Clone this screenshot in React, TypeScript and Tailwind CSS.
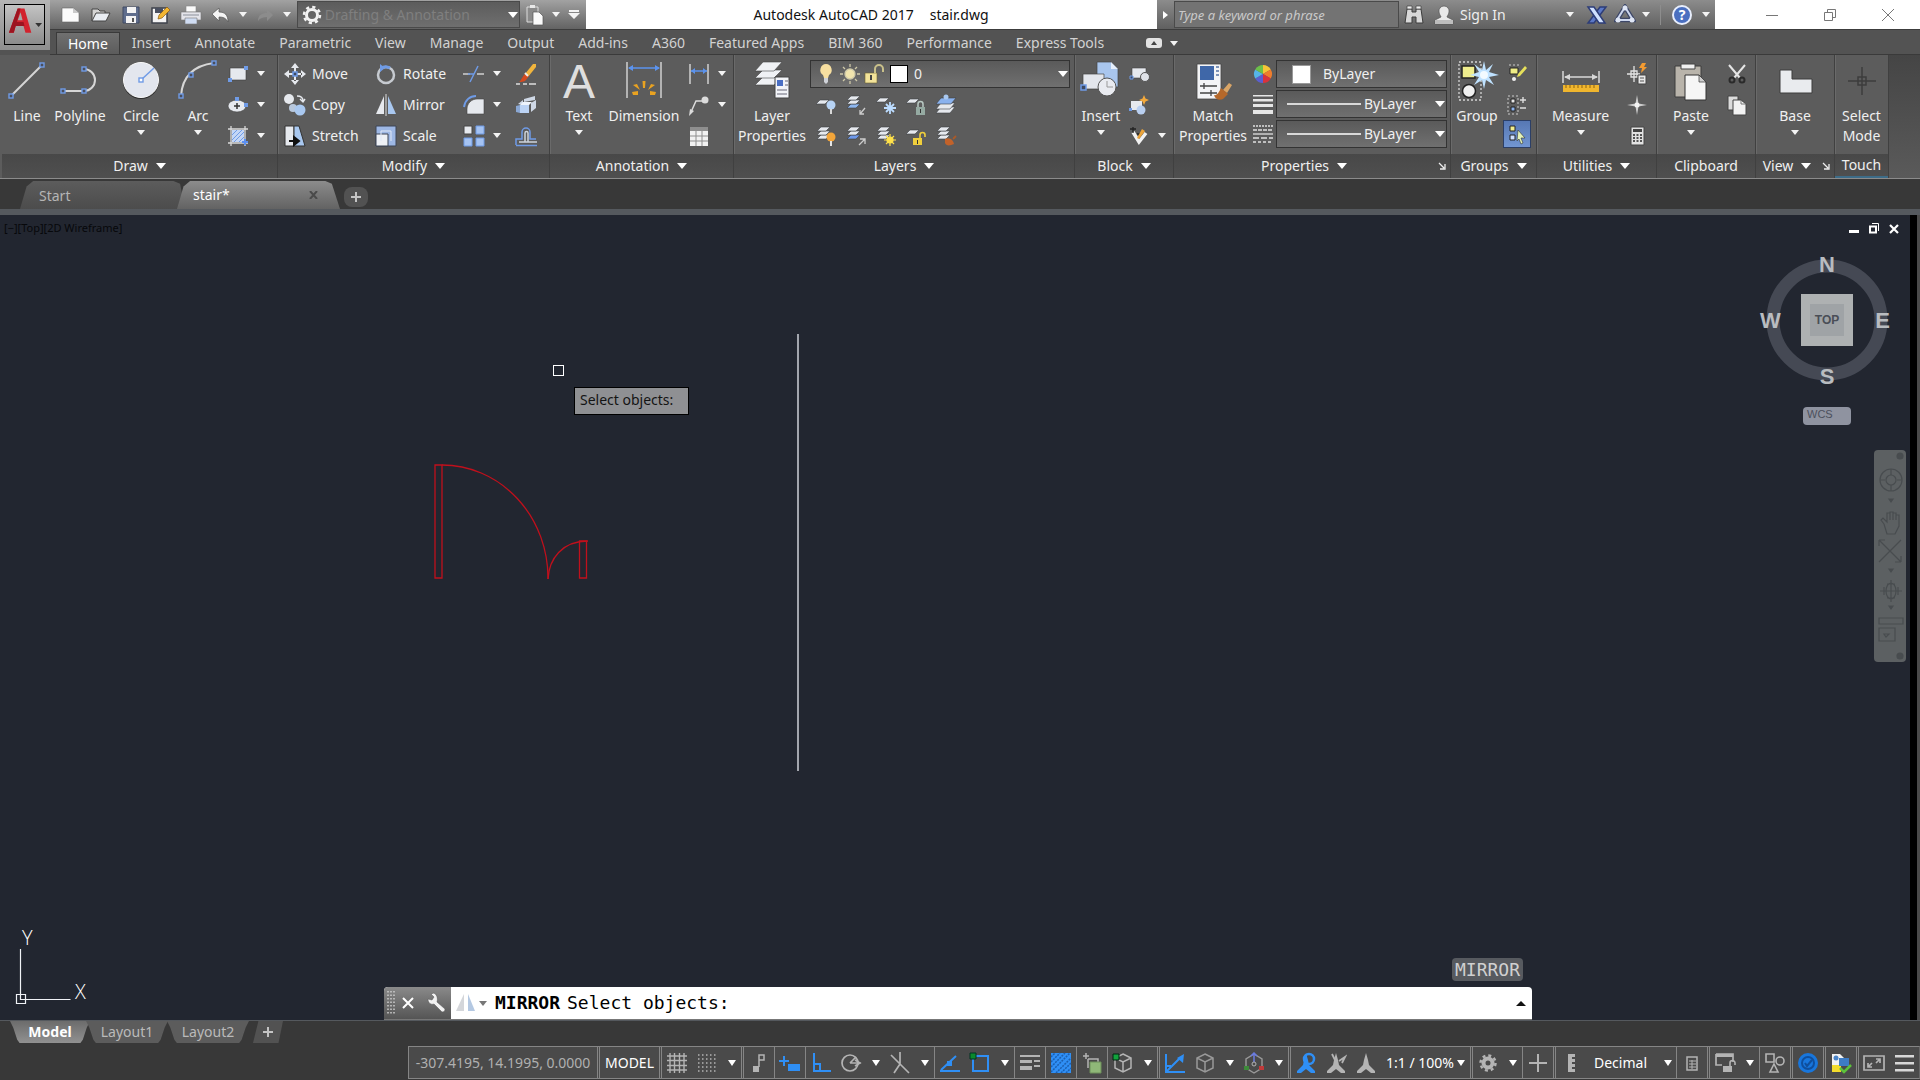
import React from "react";

type Kids = { children?: React.ReactNode };

const W = "#e6e9ee";
const B = "#6f9be6";
const L = "#a9c8f0";

function Ico({ children }: Kids) {
  return (
    <svg viewBox="0 0 22 22" className="h-[22px] w-[22px] shrink-0" fill="none" aria-hidden="true">
      {children}
    </svg>
  );
}

function Big({ children }: Kids) {
  return (
    <svg viewBox="0 0 48 48" className="h-12 w-12 shrink-0" fill="none" aria-hidden="true">
      {children}
    </svg>
  );
}

function Tri() {
  return (
    <svg viewBox="0 0 8 5" className="h-[5px] w-2 shrink-0" aria-hidden="true">
      <path d="M0 0h8L4 5z" fill="#f4f4f4" />
    </svg>
  );
}

function TriBig() {
  return (
    <svg viewBox="0 0 10 6" className="h-[6px] w-[10px] shrink-0" aria-hidden="true">
      <path d="M0 0h10L5 6z" fill="#fff" />
    </svg>
  );
}

function Node({ x, y }: { x: number; y: number }) {
  return <rect x={x - 2} y={y - 2} width="4" height="4" fill="#4a4f5c" stroke={B} strokeWidth="1.4" />;
}

/* ---------- small icon parts ---------- */

function Sheet({ x, y, fill = W }: { x: number; y: number; fill?: string }) {
  return <path d={`M${x + 4} ${y}h9l-4 4h-9z`} fill={fill} stroke="#3d3f44" strokeWidth=".6" />;
}

function Stack({ last = W }: { last?: string }) {
  return (
    <>
      <Sheet x={2} y={10} fill={last} />
      <Sheet x={2} y={6} />
      <Sheet x={2} y={2} />
    </>
  );
}

function Sun({ x, y, fill }: { x: number; y: number; fill: string }) {
  return (
    <g stroke={fill} strokeWidth="1.2">
      <circle cx={x} cy={y} r="3" fill={fill} />
      <path
        d={`M${x - 6} ${y}h12M${x} ${y - 6}v12M${x - 4} ${y - 4}l8 8M${x + 4} ${y - 4}l-8 8`}
      />
    </g>
  );
}

/* ---------- ribbon building blocks ---------- */

function Panel({
  title,
  arrow = true,
  launcher = false,
  underline = false,
  children,
}: Kids & { title: string; arrow?: boolean; launcher?: boolean; underline?: boolean }) {
  return (
    <section
      aria-label={title}
      className="flex min-w-0 flex-col border-r border-[#404040] shadow-[1px_0_0_#6a6a6a]"
    >
      <div className="flex h-[99px] items-start pt-[3px]">{children}</div>
      <div
        className={
          underline
            ? "relative flex h-6 items-center justify-center border-b-2 border-[#3d6c88] bg-gradient-to-b from-[#484848] to-[#4f4f4f]"
            : "relative flex h-6 items-center justify-center bg-gradient-to-b from-[#484848] to-[#4f4f4f]"
        }
      >
        <button className={launcher ? "flex items-center gap-2 pr-4 text-[#f0f0f0]" : "flex items-center gap-2 text-[#f0f0f0]"}>
          {title}
          {arrow && <TriBig />}
        </button>
        {launcher && (
          <button aria-label={title + " settings"} className="absolute right-1 top-2">
            <svg viewBox="0 0 8 8" className="h-2 w-2" fill="none" stroke="#eee" strokeWidth="1.3">
              <path d="M1 1l5 5M7 2v5H2" />
            </svg>
          </button>
        )}
      </div>
    </section>
  );
}

function BigButton({
  icon,
  label,
  arrow = false,
  width,
}: {
  icon: React.ReactNode;
  label: string[];
  arrow?: boolean;
  width: string;
}) {
  return (
    <button className={"flex shrink-0 flex-col items-center leading-5 " + width}>
      {icon}
      {label.map((t) => (
        <span key={t} className="whitespace-nowrap">
          {t}
        </span>
      ))}
      {arrow && (
        <span className="pt-1">
          <Tri />
        </span>
      )}
    </button>
  );
}

function Tool({
  name,
  text,
  arrow = false,
  children,
}: Kids & { name: string; text?: boolean; arrow?: boolean }) {
  return (
    <button aria-label={name} className="flex h-[31px] items-center whitespace-nowrap">
      {children}
      {text && <span className="ml-[6px]">{name}</span>}
      {arrow && (
        <span className="ml-2">
          <Tri />
        </span>
      )}
    </button>
  );
}

function Combo({
  label,
  value,
  lead,
  className,
}: {
  label: string;
  value: string;
  lead: React.ReactNode;
  className: string;
}) {
  return (
    <div
      className={
        "flex items-center border border-[#333] bg-gradient-to-b from-[#5a5a5a] to-[#707070] pr-px " +
        className
      }
    >
      {lead}
      <select
        aria-label={label}
        className="min-w-0 flex-1 appearance-none bg-transparent leading-5 text-[#f0f0f0] outline-none"
      >
        <option>{value}</option>
      </select>
      <TriBig />
    </div>
  );
}

/* ---------- title bar ---------- */

function QuickAccess() {
  const cell = "flex w-[30px] shrink-0 items-center justify-center";
  return (
    <div className="flex w-[536px] shrink-0 items-center bg-gradient-to-b from-[#a2a2a2] to-[#636363] pl-[6px]">
      <button aria-label="New" className={cell}>
        <Ico>
          <path d="M2 4h11l6 5v9H2z" fill="#fafafa" stroke="#666" strokeWidth=".6" />
          <path d="M13 4v5h6z" fill="#c9c9c9" />
        </Ico>
      </button>
      <button aria-label="Open" className={cell}>
        <Ico>
          <path d="M2 17V5h6l2 2h5v3" fill="#d5d5d5" stroke="#444" />
          <path d="M2 17l4-8h14l-4 8z" fill="#e9edf3" stroke="#444" />
        </Ico>
      </button>
      <button aria-label="Save" className={cell}>
        <Ico>
          <path d="M3 3h16v16H3z" fill="#5f6d8c" stroke="#414b63" />
          <path d="M7 3h9v6H7zM6 12h10v7H6z" fill="#f3f3f3" />
          <path d="M12 14h2v4h-2z" fill="#555" />
        </Ico>
      </button>
      <button aria-label="Save As" className={cell}>
        <Ico>
          <path d="M2 4h15v15H2z" fill="#f3f3f3" stroke="#3e424b" strokeWidth="1.5" />
          <path d="M5 4h8v5H5z" fill="#4a5060" />
          <path d="M8 15l1-4 8-8 3 3-8 8z" fill="#f2b632" stroke="#8a5a10" strokeWidth=".7" />
        </Ico>
      </button>
      <button aria-label="Plot" className={cell}>
        <Ico>
          <path d="M6 2h10v6H6z" fill="#fafafa" stroke="#888" strokeWidth=".6" />
          <path d="M1 8h20v8H1z" fill="#e4e4ea" stroke="#777" strokeWidth=".6" />
          <path d="M5 14h12v6H5z" fill="#cfdcf2" stroke="#777" strokeWidth=".6" />
          <path d="M3 11h16" stroke="#8a8f99" />
        </Ico>
      </button>
      <button aria-label="Undo" className={cell}>
        <Ico>
          <path d="M9 4v4c6 0 9 3 9 10-2-4-5-5-9-5v4L2 10z" fill="#f4f4f4" stroke="#555" strokeWidth=".7" />
        </Ico>
      </button>
      <button aria-label="Undo history" className="flex w-[14px] justify-center">
        <Tri />
      </button>
      <button aria-label="Redo" className={cell}>
        <Ico>
          <path d="M13 5v4C8 9 4 11 4 17c2-3 5-4 9-4v4l6-6z" fill="#8c8c8c" />
        </Ico>
      </button>
      <button aria-label="Redo history" className="flex w-[14px] justify-center">
        <Tri />
      </button>
      <div className="ml-[3px] flex h-[27px] w-[226px] items-center border border-[#4a4a4a] bg-gradient-to-b from-[#5c5c5c] to-[#6f6f6f] pl-[3px] pr-px">
        <Ico>
          <circle cx="11" cy="11" r="5.5" stroke="#f2f2f2" strokeWidth="3" />
          <circle cx="11" cy="11" r="8" stroke="#f2f2f2" strokeWidth="2.5" strokeDasharray="3.2 3.08" />
        </Ico>
        <select
          aria-label="Workspace"
          className="min-w-0 flex-1 appearance-none bg-transparent pl-[2px] leading-5 text-[#7f7f7f] outline-none"
        >
          <option>Drafting &amp; Annotation</option>
        </select>
        <TriBig />
      </div>
      <button aria-label="Paste" className={cell}>
        <Ico>
          <path d="M3 3h11v15H3z" fill="#8a8a8a" stroke="#ddd" />
          <path d="M6 1h5v3H6z" fill="#e8e8e8" />
          <path d="M9 8h6l4 4v9H9z" fill="#fafafa" stroke="#555" strokeWidth=".7" />
        </Ico>
      </button>
      <button aria-label="Paste options" className="flex w-3 justify-center">
        <Tri />
      </button>
      <button aria-label="Customize toolbar" className="flex w-6 justify-center">
        <svg viewBox="0 0 12 9" className="h-[9px] w-3" fill="#f4f4f4">
          <path d="M1 0h10v2H1zM0 3h12L6 9z" />
        </svg>
      </button>
    </div>
  );
}

function InfoCenter() {
  return (
    <div className="flex w-[558px] shrink-0 items-center bg-gradient-to-b from-[#8c8c8c] to-[#606060]">
      <button aria-label="Collapse search" className="flex w-[17px] justify-center">
        <svg viewBox="0 0 5 8" className="h-2 w-[5px]">
          <path d="M0 0v8l5-4z" fill="#fff" />
        </svg>
      </button>
      <input
        aria-label="Search"
        placeholder="Type a keyword or phrase"
        className="h-[27px] w-[225px] border border-[#4a4a4a] bg-[#737373] px-[3px] text-[13px] italic text-white outline-none placeholder:text-[#c9c9c9]"
      />
      <button aria-label="Find" className="flex w-[30px] justify-center">
        <Ico>
          <path d="M4 5h5v3h4V5h5l2 14h-7v-6H9v6H2z" fill="#d8d8d8" stroke="#3c3c3c" />
          <path d="M4 2h5v3H4zM13 2h5v3h-5z" fill="#efefef" stroke="#3c3c3c" strokeWidth=".7" />
        </Ico>
      </button>
      <button className="flex w-[84px] items-center gap-[5px] pl-1 text-[#eee]">
        <Ico>
          <path d="M11 2a5 5 0 0 1 5 6c-.4 3-2 4-2 5l6 3v4H2v-4l6-3c0-1-1.600-2-2-5a5 5 0 0 1 5-6z" fill="#e9e9e9" stroke="#555" strokeWidth=".7" />
          <path d="M2 16h18v4H2z" fill="#bdbdbd" />
        </Ico>
        <span className="whitespace-nowrap">Sign In</span>
      </button>
      <span className="flex flex-1 justify-end pr-2">
        <Tri />
      </span>
      <button aria-label="Exchange Apps" className="flex w-[30px] justify-center">
        <Ico>
          <path d="M14 3h6L8 19H2z" fill="#5b78c6" stroke="#2d3d78" strokeWidth="1.500" />
          <path d="M2 3h6l11 16h-6z" fill="#cfe0ff" stroke="#2d3d78" strokeWidth="1.500" />
        </Ico>
      </button>
      <button aria-label="Autodesk 360" className="flex w-[26px] justify-center">
        <Ico>
          <path d="M11 3l8 13H3z" stroke="#3d4768" strokeWidth="4.500" />
          <path d="M11 3l8 13H3z" stroke="#ccd6ee" strokeWidth="2" />
          <circle cx="11" cy="4" r="2.500" fill="#dfe6f5" />
          <circle cx="4" cy="16" r="2.500" fill="#dfe6f5" />
          <circle cx="18" cy="16" r="2.500" fill="#dfe6f5" />
        </Ico>
      </button>
      <span className="flex w-4 justify-center">
        <Tri />
      </span>
      <span className="mx-[6px] h-5 w-px bg-[#8d8d8d]" />
      <button aria-label="Help" className="flex w-[30px] justify-center">
        <span className="flex h-5 w-5 items-center justify-center rounded-full border-2 border-[#e8eefc] bg-[#4a6fc0] text-sm font-bold text-white">
          ?
        </span>
      </button>
      <span className="flex w-[18px] justify-center">
        <Tri />
      </span>
    </div>
  );
}

function WindowButtons() {
  const cls = "flex w-[58px] items-center justify-center";
  return (
    <div className="flex w-[205px] shrink-0 bg-white pl-7">
      <button aria-label="Minimize" className={cls}>
        <svg viewBox="0 0 12 12" className="h-3 w-3" stroke="#777">
          <path d="M0 6.500h12" />
        </svg>
      </button>
      <button aria-label="Restore" className={cls}>
        <svg viewBox="0 0 12 12" className="h-3 w-3" stroke="#777" fill="none">
          <path d="M.5 3.500h8v8h-8zM3.500 3.500v-3h8v8h-3" />
        </svg>
      </button>
      <button aria-label="Close" className={cls}>
        <svg viewBox="0 0 12 12" className="h-3 w-3" stroke="#777">
          <path d="M0 0l12 12M12 0L0 12" />
        </svg>
      </button>
    </div>
  );
}

const menu = [
  "Home",
  "Insert",
  "Annotate",
  "Parametric",
  "View",
  "Manage",
  "Output",
  "Add-ins",
  "A360",
  "Featured Apps",
  "BIM 360",
  "Performance",
  "Express Tools",
];

function Header() {
  return (
    <header className="flex bg-[#535353]">
      <div className="h-[50px] w-[50px] shrink-0 bg-gradient-to-b from-[#b4b4b4] to-[#8e8e8e] p-1">
        <button
          aria-label="Application menu"
          className="flex h-[41px] w-[41px] items-center border border-black bg-gradient-to-b from-[#c4c4c4] to-[#8b8b8b]"
        >
          <svg viewBox="0 0 40 40" className="h-10 w-10">
            <path d="M4 28L13 3h7l7 25h-6l-2-7h-8l-2 7z" fill="#d2232e" />
            <path d="M13 15l3-8 2 8z" fill="#a9a9a9" />
            <path d="M4 28L13 3h3L9 28zM12 17h7l1 4h-9z" fill="#9c1420" />
            <path d="M31 18h7l-3.500 4z" fill="#333" />
          </svg>
        </button>
      </div>
      <div className="flex min-w-0 flex-1 flex-col">
        <div className="flex h-[30px] border-b border-[#3c3c3c]">
          <QuickAccess />
          <h1 className="flex min-w-0 flex-1 items-center justify-center gap-4 whitespace-nowrap bg-white pr-px text-[#111]">
            <span>Autodesk AutoCAD 2017</span>
            <span>stair.dwg</span>
          </h1>
          <InfoCenter />
          <WindowButtons />
        </div>
        <nav className="flex h-[25px] items-end border-b border-[#3a3a3a] pl-[6px] text-[#d2d2d2]">
          {menu.map((m) => (
            <button
              key={m}
              className={
                m === "Home"
                  ? "h-[22px] whitespace-nowrap border border-b-0 border-[#3a3a3a] bg-gradient-to-b from-[#707070] to-[#5c5c5c] px-[11px] leading-5 text-white"
                  : "h-[22px] whitespace-nowrap px-3 leading-5"
              }
            >
              {m}
            </button>
          ))}
          <button aria-label="Minimize ribbon" className="ml-[30px] flex h-[22px] items-center gap-2">
            <svg viewBox="0 0 16 10" className="h-[10px] w-4">
              <rect width="16" height="10" rx="3" fill="#e3e3e3" />
              <path d="M5 7h6L8 3z" fill="#444" />
            </svg>
            <Tri />
          </button>
        </nav>
      </div>
    </header>
  );
}

/* ---------- ribbon ---------- */

function DrawPanel() {
  return (
    <Panel title="Draw">
      <BigButton
        width="w-[50px]"
        label={["Line"]}
        icon={
          <Big>
            <path d="M8 38L39 7" stroke="#d6d6d6" strokeWidth="2" />
            <Node x={8} y={38} />
            <Node x={39} y={7} />
          </Big>
        }
      />
      <BigButton
        width="w-[56px]"
        label={["Polyline"]}
        icon={
          <Big>
            <path d="M7 33h21a11 11 0 0 0 0-22" stroke="#d6d6d6" strokeWidth="2" />
            <Node x={7} y={33} />
            <Node x={28} y={33} />
            <Node x={28} y={11} />
          </Big>
        }
      />
      <BigButton
        width="w-[66px]"
        label={["Circle"]}
        arrow
        icon={
          <Big>
            <circle cx="24" cy="23" r="18" fill="#2e2e2e" />
            <circle cx="24" cy="22" r="17.500" fill="#e3e6ee" stroke="#fafafa" />
            <path d="M24 22L37 10" stroke={B} strokeWidth="1.500" />
            <rect x="22" y="20" width="4" height="4" fill="#fff" stroke={B} strokeWidth="1.400" />
          </Big>
        }
      />
      <BigButton
        width="w-[48px]"
        label={["Arc"]}
        arrow
        icon={
          <Big>
            <path d="M7 38C8 22 16 8 40 5" stroke="#d6d6d6" strokeWidth="2" />
            <Node x={7} y={38} />
            <Node x={17} y={17} />
            <Node x={40} y={5} />
          </Big>
        }
      />
      <div className="ml-[5px] flex flex-col">
        <Tool name="Rectangle" arrow>
          <Ico>
            <path d="M3 5h16v12H3z" fill={W} stroke="#3e3e3e" strokeWidth=".6" />
            <path d="M1 15h4v4H1zM17 3h4v4h-4z" fill={B} />
          </Ico>
        </Tool>
        <Tool name="Ellipse" arrow>
          <Ico>
            <ellipse cx="10" cy="12" rx="9" ry="6" fill={W} stroke="#444" strokeWidth=".6" />
            <path d="M7 12h6M10 9v6" stroke="#333" strokeWidth="1.500" />
            <path d="M8 3h4v4H8zM17 9h4v4h-4z" fill={B} />
          </Ico>
        </Tool>
        <Tool name="Hatch" arrow>
          <Ico>
            <path d="M5 5h12v12H5z" fill="#c4d6f5" />
            <path d="M5 10l5-5M5 15l10-10M7 17L17 7M12 17l5-5" stroke={B} />
            <path d="M4 1v20M18 1v20M1 4h20M1 18h20" stroke="#d9d9d9" strokeWidth="1.300" />
            <path d="M15 17h6M18 14v6" stroke="#5b8ff0" strokeWidth="2" />
          </Ico>
        </Tool>
      </div>
    </Panel>
  );
}

function ModifyPanel() {
  return (
    <Panel title="Modify">
      <div className="flex w-[91px] shrink-0 flex-col pl-[6px]">
        <Tool name="Move" text>
          <Ico>
            <path
              d="M11 0l4 5H7zM11 22l4-5H7zM0 11l5-4v8zM22 11l-5-4v8zM10 4h2v5h-2zM10 13h2v5h-2zM4 10h5v2H4zM13 10h5v2h-5z"
              fill={W}
            />
            <path d="M9 9h4v4H9z" fill="#3f4a60" stroke={B} strokeWidth="1.500" />
          </Ico>
        </Tool>
        <Tool name="Copy" text>
          <Ico>
            <circle cx="5" cy="5" r="5" fill={W} />
            <circle cx="9" cy="14" r="4" fill="#b8c8dd" />
            <circle cx="16" cy="16" r="5.500" fill={L} />
            <path d="M13 2c4 0 6 1 6 5M16 5l3 3 2-3" stroke={W} strokeWidth="1.400" />
          </Ico>
        </Tool>
        <Tool name="Stretch" text>
          <Ico>
            <path d="M1 1h9v20H1z" fill={W} stroke="#333" />
            <path d="M10 1h5l6 20H10z" fill={L} stroke="#333" />
            <path d="M5 16h8M10 12l5 4-5 4z" stroke="#111" strokeWidth="2" fill="#111" />
          </Ico>
        </Tool>
      </div>
      <div className="flex w-[87px] shrink-0 flex-col pl-[6px]">
        <Tool name="Rotate" text>
          <Ico>
            <circle cx="11" cy="12" r="8" stroke="#c6cad0" strokeWidth="2.500" />
            <path d="M6 5a9 9 0 0 1 9 0" stroke={B} strokeWidth="3" />
            <path d="M5 1l5 4-5 4z" fill={B} />
          </Ico>
        </Tool>
        <Tool name="Mirror" text>
          <Ico>
            <path d="M9 2v18H1z" fill={W} />
            <path d="M13 2v18h8z" fill={L} />
            <path d="M11 0v22" stroke="#ddd" />
          </Ico>
        </Tool>
        <Tool name="Scale" text>
          <Ico>
            <path d="M1 1h20v20H1z" fill="#9db7e4" stroke="#3d4554" />
            <path d="M1 9h12v12H1z" fill="#eef1f6" stroke="#3d4554" />
            <path d="M6 16V6h10v10" stroke="#dfe8f8" strokeWidth="1" />
          </Ico>
        </Tool>
      </div>
      <div className="flex shrink-0 flex-col pl-[7px]">
        <Tool name="Trim" arrow>
          <Ico>
            <path d="M0 11h7M14 11h7" stroke="#cfcfcf" strokeWidth="1.500" />
            <path d="M7 19L15 3M5 11h6" stroke={B} strokeWidth="1.500" />
          </Ico>
        </Tool>
        <Tool name="Fillet" arrow>
          <Ico>
            <path d="M4 20v-5C4 9 9 5 14 5h7v15z" fill={W} stroke="#444" strokeWidth=".6" />
            <path d="M1 13C2 6 7 2 13 2" stroke={B} strokeWidth="2" />
          </Ico>
        </Tool>
        <Tool name="Array" arrow>
          <Ico>
            <path d="M1 1h8v8H1z" fill={W} stroke="#444" />
            <path d="M13 1h8v8h-8zM1 13h8v8H1zM13 13h8v8h-8z" fill="#a5c3f2" stroke={B} />
          </Ico>
        </Tool>
      </div>
      <div className="flex shrink-0 flex-col pl-[14px]">
        <Tool name="Erase">
          <Ico>
            <path d="M1 21h4M8 21h4M14 21h7" stroke="#ddd" strokeWidth="1.300" />
            <path d="M18 1h3v3l-8 10-3-3z" fill="#f1b53d" />
            <path d="M11 10l3 3-3 4c-2 2-5 2-7 2 3-2 3-6 7-9z" fill="#d54a1e" />
            <path d="M10 10l3 3" stroke="#f1efe6" strokeWidth="2" />
          </Ico>
        </Tool>
        <Tool name="Explode">
          <Ico>
            <path d="M9 5l11-3v4L9 8zM3 10l5-4v5zM16 9l5-3v8l-5 4z" fill="#cfd8e6" />
            <path d="M5 11h9v8H5z" fill="#bcd3f4" />
            <path d="M5 11l3-3h9l-3 3z" fill="#eef3fb" />
            <path d="M1 12l4-1v8l-4-1z" fill="#8aa7d3" />
          </Ico>
        </Tool>
        <Tool name="Offset">
          <Ico>
            <path d="M1 20v-6h6V7a4 4 0 0 1 8 0v7h6" stroke={B} strokeWidth="1.500" />
            <path d="M22 17H4M10 17V8a1.500 1.500 0 0 1 3 0v9" stroke="#cdd3dc" strokeWidth="1.500" />
            <path d="M1 20.500h21" stroke={B} strokeWidth="1.500" />
          </Ico>
        </Tool>
      </div>
    </Panel>
  );
}

function AnnotationPanel() {
  return (
    <Panel title="Annotation">
      <BigButton
        width="w-[58px]"
        label={["Text"]}
        arrow
        icon={
          <span className="flex h-12 items-center font-['Liberation_Sans'] text-[48px] leading-none text-[#dedede]">
            A
          </span>
        }
      />
      <BigButton
        width="w-[72px]"
        label={["Dimension"]}
        icon={
          <Big>
            <path d="M7 4v36M41 4v36" stroke="#d0d0d0" strokeWidth="1.500" />
            <path d="M9 10h30" stroke="#5b93ee" strokeWidth="1.500" />
            <path d="M8 10l5-3v6zM40 10l-5-3v6z" fill="#5b93ee" />
            <g fill="#eaa321">
              <path d="M22.500 23h3l-.5 7h-2zM13 27l4-1 3 6zM35 27l-4-1-3 6zM12 34l6-1v4h-5zM36 34l-6-1v4h5z" />
            </g>
          </Big>
        }
      />
      <div className="ml-2 flex flex-col">
        <Tool name="Linear" arrow>
          <Ico>
            <path d="M2 1v20M20 1v20" stroke="#d0d0d0" strokeWidth="1.500" />
            <path d="M3 8h16" stroke="#5b93ee" strokeWidth="1.500" />
            <path d="M3 8l4-3v6zM19 8l-4-3v6z" fill="#5b93ee" />
          </Ico>
        </Tool>
        <Tool name="Leader" arrow>
          <Ico>
            <path d="M3 18L8 7h6" stroke="#dcdcdc" strokeWidth="1.500" />
            <path d="M1 22l1-7 4 2z" fill="#dcdcdc" />
            <circle cx="17" cy="6" r="3.500" fill="#dcdcdc" />
          </Ico>
        </Tool>
        <Tool name="Table">
          <Ico>
            <path d="M2 2h18v19H2z" fill="#f2f2f2" />
            <path d="M2 2h18v4H2z" fill="#8e8e8e" />
            <path d="M8 6v15M14 6v15M2 11h18M2 16h18" stroke="#8e8e8e" />
          </Ico>
        </Tool>
      </div>
    </Panel>
  );
}

function LayersPanel() {
  return (
    <Panel title="Layers">
      <BigButton
        width="w-[76px]"
        label={["Layer", "Properties"]}
        icon={
          <Big>
            <g fill="#f0f2f5" stroke="#444" strokeWidth=".6">
              <path d="M15 19h19l-8 8H7z" />
              <path d="M15 12h19l-8 8H7z" />
              <path d="M15 4h19l-8 9H7z" />
            </g>
            <path d="M27 19h14v21H27z" fill="#f2f4f8" stroke="#444" />
            <path d="M29 22h6v6h-6z" fill="#4a6fc4" />
            <path d="M37 23h3M37 27h3M29 32h10M29 36h10" stroke="#667" strokeWidth="1.200" />
          </Big>
        }
      />
      <div className="flex min-w-0 flex-1 flex-col pr-1">
        <div className="flex h-[31px] items-center">
          <Combo
            label="Layer"
            value="0"
            className="h-7 min-w-0 flex-1"
            lead={
              <>
                <span className="flex w-[103px] shrink-0 items-center gap-[2px] pl-1">
                  <Ico>
                    <path d="M11 1a6 6 0 0 1 3 11l-1 3H9l-1-3a6 6 0 0 1 3-11z" fill="#f7dfa0" />
                    <path d="M9 15h4v4l-2 2-2-2z" fill="#cfd2d8" />
                  </Ico>
                  <Ico>
                    <g stroke="#cfc9a8" strokeWidth="1.300">
                      <circle cx="11" cy="11" r="5" fill="#f1e4ad" />
                      <path d="M11 1v3M11 18v3M1 11h3M18 11h3M4 4l2 2M16 16l2 2M18 4l-2 2M6 16l-2 2" />
                    </g>
                  </Ico>
                  <Ico>
                    <path d="M2 10h12v10H2z" fill="#f3e39a" stroke="#6b6130" strokeWidth=".6" />
                    <path d="M12 10V6a4 4 0 0 1 8 0v3" stroke="#c9c08a" strokeWidth="2" />
                    <path d="M7 12h2v5H7z" fill="#444" />
                  </Ico>
                  <span className="ml-[3px] h-[18px] w-[18px] shrink-0 border border-black bg-white" />
                </span>
              </>
            }
          />
        </div>
        <div className="flex gap-2 pl-[5px]">
          <Tool name="Layer off">
            <Ico>
              <Sheet x={1} y={6} />
              <circle cx="16" cy="11" r="4.500" fill="#b7d3f5" />
              <path d="M15 15h2v5h-2z" fill="#d9d9d9" />
            </Ico>
          </Tool>
          <Tool name="Isolate">
            <Ico>
              <Stack last="#8db6ee" />
              <path d="M20 14l-5 6M15 16v4h4" stroke="#ccc" strokeWidth="1.300" />
            </Ico>
          </Tool>
          <Tool name="Freeze">
            <Ico>
              <Sheet x={1} y={4} />
              <path d="M9 14h12M15 8v12M11 10l8 8M19 10l-8 8" stroke="#bcdcff" strokeWidth="1.800" />
            </Ico>
          </Tool>
          <Tool name="Lock">
            <Ico>
              <Sheet x={1} y={5} />
              <path d="M11 13h9v8h-9z" fill="#95aaa2" />
              <path d="M13 13v-3a2.500 2.500 0 0 1 5 0v3" stroke="#b9c9c3" strokeWidth="1.500" />
              <path d="M15 15h1v4h-1z" fill="#333" />
            </Ico>
          </Tool>
          <Tool name="Make current">
            <Ico>
              <g strokeWidth=".6" stroke="#3d3f44">
                <path d="M6 13h14l-5 6H1z" fill={W} />
                <path d="M6 9h14l-5 6H1z" fill={W} />
                <path d="M6 4h15l-5 6H1z" fill="#8ab2ee" />
              </g>
              <circle cx="11" cy="3" r="2.500" fill={L} />
            </Ico>
          </Tool>
        </div>
        <div className="flex gap-2 pl-[5px]">
          <Tool name="Turn all on">
            <Ico>
              <Stack />
              <circle cx="16" cy="12" r="4.500" fill="#f2a53a" />
              <path d="M15 16h2v5h-2z" fill="#e5e5e5" />
            </Ico>
          </Tool>
          <Tool name="Unisolate">
            <Ico>
              <Stack last="#6d98ea" />
              <path d="M14 20l6-6M15 14h5v5" stroke="#ccc" strokeWidth="1.300" />
            </Ico>
          </Tool>
          <Tool name="Thaw">
            <Ico>
              <Stack />
              <Sun x={15} y={15} fill="#ffe14a" />
            </Ico>
          </Tool>
          <Tool name="Unlock">
            <Ico>
              <Sheet x={1} y={5} />
              <path d="M8 13h9v7H8z" fill="#f0cf3c" />
              <path d="M15 13v-3a2.500 2.500 0 0 1 5 0v2" stroke="#f0cf3c" strokeWidth="1.600" />
              <path d="M12 15h1v4h-1z" fill="#333" />
            </Ico>
          </Tool>
          <Tool name="Match layer">
            <Ico>
              <Stack />
              <path d="M10 14c4-2 8 0 9 5-4 2-8 2-9-1z" fill="#c2622a" />
              <path d="M18 14l3-3" stroke="#a85a2a" strokeWidth="2" />
            </Ico>
          </Tool>
        </div>
      </div>
    </Panel>
  );
}

function BlockPanel() {
  return (
    <Panel title="Block">
      <BigButton
        width="w-[52px]"
        label={["Insert"]}
        arrow
        icon={
          <Big>
            <path d="M20 4h14l7 7v18H20z" fill="#a9c6ee" stroke="#444" strokeWidth=".7" />
            <path d="M34 4v7h7z" fill="#e6effc" />
            <path d="M6 16h21v15H6z" fill="#e3e6ec" stroke="#444" strokeWidth=".7" />
            <circle cx="30" cy="29" r="9" fill="#e9ebf0" stroke="#555" />
            <path d="M30 23v6h6" stroke="#999" />
            <path d="M4 27h5v5H4z" fill="#3f4a60" stroke={B} strokeWidth="1.500" />
          </Big>
        }
      />
      <div className="ml-px flex flex-col">
        <Tool name="Create block">
          <Ico>
            <path d="M4 5h14v10H4z" fill={W} stroke="#444" strokeWidth=".6" />
            <circle cx="17" cy="14" r="4.500" fill="#dfe2e8" stroke="#555" />
            <path d="M2 13h3v3H2z" fill="#3f4a60" stroke={B} />
          </Ico>
        </Tool>
        <Tool name="Edit block">
          <Ico>
            <path d="M3 7h11v9H3z" fill={W} />
            <circle cx="13" cy="16" r="4.500" fill="#b9cff0" />
            <path d="M1 14h3v3H1z" fill={B} />
            <path d="M16 1l1.500 3.500L21 6l-3.500 1.500L16 11l-1.500-3.500L11 6l3.500-1.500z" fill="#f3a93c" />
          </Ico>
        </Tool>
        <Tool name="Edit attributes" arrow>
          <Ico>
            <path d="M5 7l6 10 7-9" stroke="#f2f2f2" strokeWidth="3.500" />
            <path d="M2 4h6M5 2v6M9 9h5" stroke="#222" strokeWidth="1.300" />
            <path d="M9 13l5-9 3 2-6 8z" fill="#eda53a" />
          </Ico>
        </Tool>
      </div>
    </Panel>
  );
}

function PropertiesPanel() {
  const line = <span className="ml-[10px] mr-[3px] h-[2px] w-[74px] shrink-0 bg-[#d8d8d8]" />;
  return (
    <Panel title="Properties" launcher>
      <BigButton
        width="w-[78px]"
        label={["Match", "Properties"]}
        icon={
          <Big>
            <path d="M8 6h24v35H8z" fill="#f3f4f6" stroke="#444" strokeWidth=".8" />
            <path d="M11 8h14v14H11z" fill="#3f67a8" />
            <path d="M27 9h3M27 13h3M27 17h3" stroke="#7d93b8" strokeWidth="2" />
            <path d="M11 28h17M11 35h17M15 25v6M22 32v6" stroke="#444" strokeWidth="1.300" />
            <path d="M40 25l3 2-5 8-4-3z" fill="#d9a567" />
            <path d="M32 30l7 6-5 5c-4 2-8 0-9-4 3 1 5-3 7-7z" fill="#b5682a" />
          </Big>
        }
      />
      <div className="flex min-w-0 flex-1 flex-col pr-[3px] pt-px">
        <div className="flex h-[30px] items-center gap-[2px]">
          <Ico>
            <path d="M11 11V2a9 9 0 0 1 7.800 4.500z" fill="#f6c437" />
            <path d="M11 11l7.800-4.500a9 9 0 0 1 0 9z" fill="#ef7d2d" />
            <path d="M11 11l7.800 4.500A9 9 0 0 1 11 20z" fill="#d9333c" />
            <path d="M11 11v9a9 9 0 0 1-7.800-4.500z" fill="#5a5fd0" />
            <path d="M11 11l-7.800 4.500a9 9 0 0 1 0-9z" fill="#56b5e8" />
            <path d="M11 11L3.200 6.500A9 9 0 0 1 11 2z" fill="#6cc04a" />
          </Ico>
          <Combo
            label="Object color"
            value="ByLayer"
            className="h-[28px] min-w-0 flex-1"
            lead={<span className="ml-[15px] mr-[12px] h-[19px] w-[19px] shrink-0 border border-[#999] bg-white" />}
          />
        </div>
        <div className="flex h-[30px] items-center gap-[2px]">
          <Ico>
            <path d="M1 2h20v1.500H1zM1 6h20v2.500H1zM1 11h20v3H1zM1 17h20v4H1z" fill="#e6e6e6" />
          </Ico>
          <Combo label="Lineweight" value="ByLayer" className="h-[28px] min-w-0 flex-1" lead={line} />
        </div>
        <div className="flex h-[30px] items-center gap-[2px]">
          <Ico>
            <g stroke="#e0e0e0" strokeWidth="1.300">
              <path d="M1 3h20" strokeDasharray="2 1" />
              <path d="M1 7h20" strokeDasharray="4 1" />
              <path d="M1 11h20" />
              <path d="M1 15h20" strokeDasharray="6 2" />
              <path d="M1 19h20" strokeDasharray="3 2" />
            </g>
          </Ico>
          <Combo label="Linetype" value="ByLayer" className="h-[28px] min-w-0 flex-1" lead={line} />
        </div>
      </div>
    </Panel>
  );
}

function GroupsPanel() {
  return (
    <Panel title="Groups">
      <BigButton
        width="w-[52px]"
        label={["Group"]}
        icon={
          <Big>
            <path d="M6 4h22v38H6z" stroke="#d5d5d5" strokeDasharray="2 2" strokeWidth="1.300" />
            <path d="M9 8h13v12H9z" fill="#f0ee8e" stroke="#222" strokeWidth="1.500" />
            <circle cx="16" cy="33" r="6.500" fill="#f0f0f0" stroke="#222" strokeWidth="1.500" />
            <path
              d="M31 3l2 9 7-6-4 8 10 3-10 2 5 8-8-5-2 9-2-9-8 5 5-8-9-2 9-3-5-8 8 6z"
              fill="#bfe2ff"
            />
            <circle cx="31" cy="17" r="4" fill="#f2faff" />
          </Big>
        }
      />
      <div className="flex flex-col">
        <Tool name="Ungroup">
          <span className="flex w-7 justify-center">
            <Ico>
              <path d="M3 2h11" stroke="#ccc" strokeDasharray="2 2" />
              <path d="M4 5h8v6H4z" fill="#eeec86" stroke="#222" />
              <circle cx="8" cy="16" r="2.500" fill="#eee" stroke="#222" strokeWidth=".6" />
              <path d="M19 3l2 2-7 8-3 1 1-3z" fill="#e6e05a" />
            </Ico>
          </span>
        </Tool>
        <Tool name="Group edit">
          <span className="flex w-7 justify-center">
            <Ico>
              <path d="M2 2h10v18H2z" stroke="#ccc" strokeDasharray="2 2" />
              <path d="M5 5h4v4H5z" fill="#e8e8e8" stroke="#222" />
              <path d="M5 13h4v4H5z" fill="#8db3ee" stroke="#222" />
              <path d="M14 6h6M17 3v6M14 14h6" stroke="#ddd" strokeWidth="1.400" />
            </Ico>
          </span>
        </Tool>
        <button
          aria-label="Group selection on"
          aria-pressed="true"
          className="flex h-7 w-7 items-center justify-center border border-[#2c3f66] bg-gradient-to-b from-[#5778b4] to-[#7296d2]"
        >
          <Ico>
            <path d="M4 3h5v5H4z" fill="#f0ee8e" stroke="#222" />
            <path d="M4 12h5v5H4z" fill="#cfe0ff" stroke="#222" />
            <path d="M12 7l7 8h-4l2 5-2 1-2-5-2 2z" fill="#e4f3b8" stroke="#333" strokeWidth=".6" />
          </Ico>
        </button>
      </div>
    </Panel>
  );
}

function UtilitiesPanel() {
  return (
    <Panel title="Utilities">
      <BigButton
        width="w-[87px]"
        label={["Measure"]}
        arrow
        icon={
          <Big>
            <path d="M6 13v12M42 13v12M8 19h32" stroke="#d8d8d8" strokeWidth="1.500" />
            <path d="M7 19l6-3v6zM41 19l-6-3v6z" fill="#d8d8d8" />
            <path d="M6 27h36v7H6z" fill="#f0b62e" />
            <path d="M9 27v3M13 27v3M17 27v3M21 27v3M25 27v3M29 27v3M33 27v3M37 27v3" stroke="#8d6210" />
          </Big>
        }
      />
      <div className="ml-[2px] flex flex-col">
        <Tool name="Quick select">
          <Ico>
            <path d="M8 3v16M1 11h13M5 8h6v6H5z" stroke="#e3e3e3" strokeWidth="1.300" />
            <path d="M12 12h8v9h-8z" fill="#e8e8e8" stroke="#444" />
            <path d="M14 15h4M14 18h4" stroke="#555" />
            <path d="M16 0h4l-2 4h3l-6 6 1-5h-3z" fill="#f39b31" />
          </Ico>
        </Tool>
        <Tool name="Point">
          <Ico>
            <path d="M11 1l1.500 8.500L21 11l-8.500 1.500L11 21l-1.500-8.500L1 11l8.500-1.500z" fill="#cfcfcf" />
            <circle cx="11" cy="11" r="2.500" fill="#f3f3f3" />
          </Ico>
        </Tool>
        <Tool name="Calculator">
          <Ico>
            <path d="M5 2h13v18H5z" fill="#e2e2e2" stroke="#444" />
            <path d="M7 4h9v3H7z" fill="#444" />
            <path d="M7 10h9M7 13h9M7 16h9" stroke="#555" strokeWidth="1.800" strokeDasharray="2 1.500" />
          </Ico>
        </Tool>
      </div>
    </Panel>
  );
}

function ClipboardPanel() {
  return (
    <Panel title="Clipboard" arrow={false}>
      <BigButton
        width="w-[68px]"
        label={["Paste"]}
        arrow
        icon={
          <Big>
            <path d="M8 8h26v31H8z" fill="#b9b4ab" stroke="#3c3c3c" />
            <path d="M14 6h14v5H14z" fill="#f0f0f0" stroke="#444" />
            <path d="M18 17h14l7 7v18H18z" fill="#f6f6f6" stroke="#333" />
            <path d="M32 17v7h7z" fill="#cfcfcf" stroke="#333" strokeWidth=".7" />
          </Big>
        }
      />
      <div className="ml-px flex flex-col">
        <Tool name="Cut">
          <Ico>
            <path d="M3 2l11 13M19 2L8 15" stroke="#e5e5e5" strokeWidth="2" />
            <circle cx="6" cy="17" r="2.500" stroke="#2a2a2a" strokeWidth="2" />
            <circle cx="16" cy="17" r="2.500" stroke="#2a2a2a" strokeWidth="2" />
          </Ico>
        </Tool>
        <Tool name="Copy to clipboard">
          <Ico>
            <path d="M2 2h10v14H2z" fill="#dcdcdc" stroke="#444" />
            <path d="M7 6h8l5 4v11H7z" fill="#f3f3f3" stroke="#444" />
            <path d="M15 6v4h5" stroke="#777" />
          </Ico>
        </Tool>
      </div>
    </Panel>
  );
}

function Ribbon() {
  return (
    <div className="flex flex-col bg-[#5c5c5c] pl-[2px] text-[#f0f0f0]">
      <div className="grid grid-cols-[276fr_272fr_184fr_341fr_99fr_277fr_86fr_120fr_99fr_79fr_54fr_31fr]">
        <DrawPanel />
        <ModifyPanel />
        <AnnotationPanel />
        <LayersPanel />
        <BlockPanel />
        <PropertiesPanel />
        <GroupsPanel />
        <UtilitiesPanel />
        <ClipboardPanel />
        <Panel title="View" launcher>
          <BigButton
            width="w-full"
            label={["Base"]}
            arrow
            icon={
              <Big>
                <path d="M9 12h12v9h20v14H9z" fill="#e9ebee" stroke="#3c3c3c" />
              </Big>
            }
          />
        </Panel>
        <Panel title="Touch" arrow={false} underline>
          <BigButton
            width="w-full"
            label={["Select", "Mode"]}
            icon={
              <Big>
                <path d="M24 9v28M10 23h28M20 19h8v8h-8z" stroke="#3d3d3d" strokeWidth="1.500" />
              </Big>
            }
          />
        </Panel>
        <div className="bg-gradient-to-b from-[#454545] to-[#5a5a5a]" />
      </div>
    </div>
  );
}

function FileTabs() {
  return (
    <nav className="flex h-[31px] items-end border-t border-[#8b8b8b] bg-[#383838] pl-5">
      <button className="h-7 w-[165px] bg-gradient-to-b from-[#5c5c5c] to-[#4c4c4c] pl-[19px] text-left leading-[30px] text-[#b5b5b5] [clip-path:polygon(0_100%,4%_20%,8%_0,93%_0,97%_10%,100%_100%)]">
        Start
      </button>
      <div className="-ml-2 flex h-7 w-[163px] items-center bg-gradient-to-b from-[#8c8c8c] to-[#636363] pl-4 text-white [clip-path:polygon(0_100%,4%_20%,8%_0,91%_0,95%_10%,100%_100%)]">
        <button className="flex-1 text-left leading-[30px]">stair*</button>
        <button aria-label="Close tab" className="mr-[22px] h-2 w-[9px]">
          <svg viewBox="0 0 9 8" className="h-2 w-[9px]" stroke="#4a4a4a" strokeWidth="2">
            <path d="M1 0l7 8M8 0L1 8" />
          </svg>
        </button>
      </div>
      <button
        aria-label="New tab"
        className="mb-[2px] ml-1 flex h-5 w-6 items-center justify-center rounded-lg bg-[#525252]"
      >
        <svg viewBox="0 0 10 10" className="h-[10px] w-[10px]" stroke="#c4c4c4" strokeWidth="2">
          <path d="M5 0v10M0 5h10" />
        </svg>
      </button>
    </nav>
  );
}

/* ---------- drawing area ---------- */

function Compass() {
  return (
    <div className="absolute right-[20px] top-[39px] h-[132px] w-[126px] font-['Liberation_Sans'] text-[22px] font-bold leading-none text-[#b9bcc0]">
      <svg viewBox="0 0 126 132" className="h-[132px] w-[126px]" fill="none">
        <circle cx="63" cy="66" r="54" stroke="#454954" strokeWidth="13" />
        <path d="M37 40h52v52H37z" fill="#aeb1b2" />
        <path d="M46 50h34v32H46z" fill="#9fa3a6" />
      </svg>
      <span className="absolute inset-x-0 top-0 text-center">N</span>
      <span className="absolute inset-x-0 bottom-[-2px] text-center">S</span>
      <span className="absolute left-[-4px] top-14">W</span>
      <span className="absolute right-0 top-14">E</span>
      <span className="absolute inset-x-0 top-[60px] text-center text-xs leading-3 text-[#4a4e57]">TOP</span>
    </div>
  );
}

function NavBar() {
  return (
    <div
      role="toolbar"
      aria-label="Navigation"
      className="absolute right-1 top-[235px] h-[212px] w-8 rounded-sm bg-[#5c6062]"
    >
      <svg viewBox="0 0 32 212" className="h-[212px] w-8" fill="none" stroke="#484c4f" strokeWidth="1.200">
        <circle cx="26" cy="6" r="3" fill="#484c4f" />
        <circle cx="26" cy="206" r="3" fill="#484c4f" />
        <circle cx="17" cy="30" r="11" />
        <circle cx="17" cy="30" r="5" />
        <path d="M6 30h5M23 30h5M17 19v6M17 35v6" />
        <path d="M15 49h4l-2 3zM15 119h4l-2 3zM15 156h4l-2 3z" fill="#484c4f" />
        <path d="M10 74l-3-4 2-2 4 4V63h3v7-8h3v8-7h3v7-5h3v11l-4 8h-8z" />
        <path d="M5 90l22 22M27 90L5 112M5 90v6M5 90h6M27 112h-6M27 112v-6" />
        <path d="M17 130v22M6 141h22M13 134h8M13 148h8M10 137v8M24 137v8M12 141a5 8 0 0 0 10 0 5 8 0 0 0-10 0" />
        <path d="M5 168h24v6H5zM5 178h16v13H5zM10 184h5l-3 3z" />
      </svg>
    </div>
  );
}

function Viewport() {
  return (
    <main className="flex min-h-[600px] flex-1 border-t-[6px] border-[#55595e] bg-[#4a4a4a] pr-[3px]">
      <div className="relative min-w-0 flex-1 overflow-hidden border-r-[7px] border-black bg-[#222630]">
        <p className="absolute left-1 top-[5px] text-[11px] leading-4 text-[#07080b]">[−][Top][2D Wireframe]</p>

        <svg className="absolute left-[430px] top-[240px] h-[132px] w-[162px]" viewBox="0 0 162 132" fill="none">
          <g stroke="#c0101c" strokeWidth="1.300">
            <path d="M5 10h7v113H5z" />
            <path d="M12 10A106 113 0 0 1 118 124" />
            <path d="M118 124C119 104 132 86 158 86" />
            <path d="M149.500 86h7v37h-7z" />
          </g>
        </svg>
        <span className="absolute left-[797px] top-[119px] h-[437px] w-[2px] bg-[#a2a5ad]" />
        <span className="absolute left-[553px] top-[150px] h-[11px] w-[11px] border border-white" />
        <span className="absolute left-[574px] top-[172px] w-[115px] border border-black bg-[#8f9093] px-[5px] pb-1 pt-[2px] leading-5 text-[#141414]">
          Select objects:
        </span>

        <div className="absolute right-[11px] top-[8px] flex gap-[10px] text-white">
          <button aria-label="Minimize drawing">
            <svg viewBox="0 0 10 11" className="h-[11px] w-[10px]">
              <path d="M0 7h10v3H0z" fill="#fff" />
            </svg>
          </button>
          <button aria-label="Restore drawing">
            <svg viewBox="0 0 10 11" className="h-[11px] w-[10px]" fill="none" stroke="#fff">
              <path d="M1 3.500h6v6H1z" strokeWidth="2" />
              <path d="M3 .5h6.500V8" />
            </svg>
          </button>
          <button aria-label="Close drawing">
            <svg viewBox="0 0 10 11" className="h-[11px] w-[10px]" stroke="#fff" strokeWidth="2.200">
              <path d="M1 2l8 8M9 2l-8 8" />
            </svg>
          </button>
        </div>
        <Compass />
        <button className="absolute right-[59px] top-[192px] h-[18px] w-12 rounded bg-[#8f93a0] pb-1 pl-1 text-left font-['Liberation_Sans'] text-[11px] leading-3 text-[#4c505c]">
          WCS
        </button>
        <NavBar />

        <svg className="absolute bottom-[13px] left-[14px] h-[62px] w-[60px]" viewBox="0 0 60 62" fill="none" stroke="#f0f2f6" strokeWidth="1.200">
          <path d="M6.500 4v50.500h50" />
          <path d="M2.500 49.500h9v9h-9z" />
        </svg>
        <span className="absolute bottom-[72px] left-[22px] font-['Open_Sans'] text-[20px] font-light leading-5 text-white">
          Y
        </span>
        <span className="absolute bottom-[18px] left-[75px] font-['Open_Sans'] text-[20px] font-light leading-5 text-white">
          X
        </span>

        <div className="absolute bottom-0 left-[384px] right-[378px] flex flex-col items-end font-['DejaVu_Sans_Mono'] text-[18px]">
          <p className="mb-[6px] mr-[9px] rounded-sm bg-[#575a5f] px-[3px] leading-[23px] text-[#d0d0d0]">MIRROR</p>
          <div className="flex h-[33px] w-full overflow-hidden rounded-t border-b border-[#777] bg-white">
            <div className="flex w-[67px] shrink-0 items-center bg-gradient-to-b from-[#8a8a8a] to-[#555] pl-[3px]">
              <svg viewBox="0 0 8 24" className="h-6 w-2" stroke="#ccc" strokeWidth="1.500" strokeDasharray="1.500 2">
                <path d="M1 0v24M4 0v24M7 0v24" />
              </svg>
              <button aria-label="Close command line" className="ml-[7px]">
                <svg viewBox="0 0 12 12" className="h-3 w-3" stroke="#fff" strokeWidth="2">
                  <path d="M1 1l10 10M11 1L1 11" />
                </svg>
              </button>
              <button aria-label="Customize" className="ml-[11px]">
                <Ico>
                  <path
                    d="M8 2L5 3l3 3-2 3-4-1c0 4 3 6 6 5l8 8c2 0 3-1 3-3l-8-7c1-4 0-7-3-9z"
                    transform="translate(1 -1)"
                    fill="#f2f2f2"
                    stroke="#555"
                    strokeWidth=".5"
                  />
                </Ico>
              </button>
            </div>
            <button aria-label="Recent commands" className="flex w-11 shrink-0 items-center gap-[2px] pl-1">
              <Ico>
                <path d="M9 2v17H1z" fill="#d4d6da" />
                <path d="M13 2v17h7z" fill="#b4c8e2" />
              </Ico>
              <svg viewBox="0 0 8 5" className="h-[5px] w-2">
                <path d="M0 0h8L4 5z" fill="#777" />
              </svg>
            </button>
            <label htmlFor="cmd" className="flex items-center whitespace-nowrap text-black">
              <b>MIRROR</b>
              <span className="ml-[7px]">Select objects:</span>
            </label>
            <input id="cmd" className="min-w-0 flex-1 text-black outline-none" />
            <button aria-label="Command history" className="flex w-[22px] shrink-0 items-center justify-center">
              <svg viewBox="0 0 10 5" className="h-[5px] w-[10px]">
                <path d="M0 5h10L5 0z" fill="#111" />
              </svg>
            </button>
          </div>
        </div>
      </div>
    </main>
  );
}

/* ---------- status bar ---------- */

const G = "#b4b4b4";
const Bl = "#2f8ff5";

function Cell({ name, children, on }: Kids & { name: string; on?: boolean }) {
  return (
    <button aria-label={name} aria-pressed={!!on} className="flex w-[30px] shrink-0 items-center justify-center">
      {children}
    </button>
  );
}

function Drop() {
  return (
    <button aria-label="More options" className="flex w-[19px] shrink-0 items-center pl-[6px]">
      <svg viewBox="0 0 8 6" className="h-[6px] w-2">
        <path d="M0 0h8L4 6z" fill="#fff" />
      </svg>
    </button>
  );
}

function Sep() {
  return <span className="w-px shrink-0 bg-[#858585]" />;
}

function Sep2() {
  return <span className="w-[3px] shrink-0 border-x border-[#858585]" />;
}

function Figure({ color, extra }: { color: string; extra?: React.ReactNode }) {
  return (
    <Ico>
      <path d="M11 1l2 7 1 5 6 6v2h-4l-5-4-5 4H2v-2l6-6 1-5z" fill={color} />
      {extra}
    </Ico>
  );
}

function Cube({ stroke, children }: Kids & { stroke: string }) {
  return (
    <Ico>
      <path d="M11 2l8 4v10l-8 4-8-4V6zM3 6l8 4 8-4M11 10v10" stroke={stroke} strokeWidth="1.500" />
      {children}
    </Ico>
  );
}

function StatusBar() {
  return (
    <div className="mt-[25px] flex h-[33px] min-w-0 flex-1 border border-[#858585] border-r-[#666] bg-[#4a4a4a] text-white">
      <output className="min-w-0 flex-1 self-center whitespace-nowrap text-center text-[#b0b0b0]">
        -307.4195, 14.1995, 0.0000
      </output>
      <Sep2 />
      <button className="w-[59px] shrink-0">MODEL</button>
      <Sep2 />
      <Cell name="Grid">
        <Ico>
          <path d="M4 1v20M8.500 1v20M13.500 1v20M18 1v20M1 4h20M1 8.500h20M1 13.500h20M1 18h20" stroke={G} strokeWidth="1.400" />
        </Ico>
      </Cell>
      <Cell name="Snap">
        <Ico>
          <path
            d="M2 3h19M2 7h19M2 11h19M2 15h19M2 19h19"
            stroke={G}
            strokeWidth="1.400"
            strokeDasharray="1.500 2.500"
          />
        </Ico>
      </Cell>
      <Drop />
      <Sep2 />
      <Cell name="Infer constraints">
        <Ico>
          <path d="M11 3h5v5h-5zM11 3v12" stroke={G} strokeWidth="1.500" />
          <path d="M5 14h6v6H5z" fill={G} />
        </Ico>
      </Cell>
      <Sep />
      <Cell name="Dynamic input" on>
        <Ico>
          <path d="M5 4v10M0 9h10" stroke={Bl} strokeWidth="2" />
          <path d="M9 12h12v7H9z" fill={Bl} />
        </Ico>
      </Cell>
      <Sep />
      <Cell name="Ortho" on>
        <Ico>
          <path d="M4 1v18h17M4 12h6v6" stroke={Bl} strokeWidth="2" />
        </Ico>
      </Cell>
      <Cell name="Polar">
        <Ico>
          <circle cx="10" cy="11" r="8" stroke={G} strokeWidth="1.700" />
          <path d="M10 11h11M10 11l6-6M15 8l5 3-5 3" stroke={G} strokeWidth="1.700" />
        </Ico>
      </Cell>
      <Drop />
      <Cell name="Isometric drafting">
        <Ico>
          <path d="M2 3l18 18M11 0v12L5 21" stroke={G} strokeWidth="1.700" />
        </Ico>
      </Cell>
      <Drop />
      <Sep />
      <Cell name="Object snap tracking" on>
        <Ico>
          <path d="M1 19h20M2 18L17 4" stroke={Bl} strokeWidth="2" />
          <path d="M8 9h5v5H8z" fill={Bl} />
        </Ico>
      </Cell>
      <Cell name="Object snap" on>
        <Ico>
          <path d="M4 4h15v15H4z" stroke={Bl} strokeWidth="2" />
          <path d="M1 1h6v6H1z" fill="#0a8a2c" stroke="#032" />
        </Ico>
      </Cell>
      <Drop />
      <Sep />
      <Cell name="Lineweight display">
        <Ico>
          <path d="M1 3h20v2H1zM1 8h12v3H1zM15 8h6v2h-6zM1 14h12v4H1zM15 13h6v2h-6z" fill={G} />
        </Ico>
      </Cell>
      <Sep />
      <Cell name="Transparency" on>
        <Ico>
          <path d="M1 1h20v20H1z" fill={Bl} />
          <path d="M1 5l4-4M1 10l9-9M1 15L15 1M1 20L20 1M6 21L21 6M11 21l10-10M16 21l5-5" stroke="#1b5fb0" strokeWidth="1.500" strokeDasharray="2 1" />
        </Ico>
      </Cell>
      <Sep />
      <Cell name="Selection cycling">
        <Ico>
          <path d="M5 1v6M2 4h6M7 7h10v3M7 7v9" stroke={G} strokeWidth="1.500" />
          <path d="M9 10h11v11H9z" fill="#8fb878" stroke="#6d8f5a" />
        </Ico>
      </Cell>
      <Sep />
      <Cell name="3D object snap">
        <Cube stroke={G}>
          <path d="M1 2h6v6H1z" fill="#12a23c" stroke="#021" />
        </Cube>
      </Cell>
      <Drop />
      <Sep2 />
      <Cell name="Dynamic UCS" on>
        <Ico>
          <path d="M2 2v18h19M3 19L16 6M2 9v5h5" stroke={Bl} strokeWidth="2" />
          <path d="M13 6l7-4-1 9z" fill={Bl} />
        </Ico>
      </Cell>
      <Cell name="Selection filter">
        <Cube stroke="#999" />
      </Cell>
      <Drop />
      <Cell name="Gizmo">
        <Ico>
          <path d="M11 2l8 5v9l-8 5-8-5V7z" stroke="#999" strokeWidth="1.400" />
          <path d="M11 1v9M8 4l3-3 3 3" stroke="#6a7be0" strokeWidth="1.500" />
          <circle cx="11" cy="12" r="2" stroke={G} />
          <path d="M1 14h5v4H1z" fill="#3d8a3a" />
          <path d="M16 14h5v4h-5z" fill="#c03a3a" />
        </Ico>
      </Cell>
      <Drop />
      <Sep2 />
      <Cell name="Annotation visibility" on>
        <Figure color={Bl} extra={<circle cx="14" cy="7" r="5" stroke={Bl} strokeWidth="2.500" />} />
      </Cell>
      <Cell name="Auto scale">
        <Figure color={G} extra={<path d="M14 9l6-4-3 6M7 2l3 6" stroke={G} strokeWidth="1.800" />} />
      </Cell>
      <Cell name="Annotation scale">
        <Figure color={G} />
      </Cell>
      <div className="flex w-[89px] shrink-0 items-center pl-[5px] pr-[5px]">
        <select aria-label="Scale" className="min-w-0 flex-1 appearance-none bg-transparent outline-none">
          <option>1:1 / 100%</option>
        </select>
        <svg viewBox="0 0 8 6" className="h-[6px] w-2 shrink-0">
          <path d="M0 0h8L4 6z" fill="#fff" />
        </svg>
      </div>
      <Sep2 />
      <Cell name="Workspace switching">
        <Ico>
          <circle cx="11" cy="11" r="4.500" stroke={G} strokeWidth="4" />
          <circle cx="11" cy="11" r="7.500" stroke={G} strokeWidth="2.500" strokeDasharray="3 2.900" />
        </Ico>
      </Cell>
      <Drop />
      <Sep />
      <Cell name="Annotation monitor">
        <Ico>
          <path d="M11 2v18M2 11h18" stroke={G} strokeWidth="2" />
        </Ico>
      </Cell>
      <Sep2 />
      <Cell name="Units">
        <Ico>
          <path d="M8 2h7v3h-3v2h3v3h-3v2h3v3h-3v2h3v3H8z" fill={G} />
        </Ico>
      </Cell>
      <div className="flex w-[90px] shrink-0 items-center pl-2 pr-1">
        <select aria-label="Drawing units" className="min-w-0 flex-1 appearance-none bg-transparent outline-none">
          <option>Decimal</option>
        </select>
        <svg viewBox="0 0 8 6" className="h-[6px] w-2 shrink-0">
          <path d="M0 0h8L4 6z" fill="#fff" />
        </svg>
      </div>
      <Sep />
      <Cell name="Quick properties">
        <Ico>
          <path d="M6 5h10v13H6z" stroke={G} strokeWidth="1.500" />
          <path d="M8 9h7M8 12h7M8 15h7M11 8v9" stroke={G} />
        </Ico>
      </Cell>
      <Sep2 />
      <Cell name="Lock UI">
        <Ico>
          <path d="M2 2h17v8M2 2v11h6" stroke={G} strokeWidth="1.700" />
          <path d="M2 2h17v3H2zM9 14h9v6H9z" fill={G} />
          <path d="M16 14v-3a2.500 2.500 0 0 1 5 0v2" stroke={G} strokeWidth="1.600" />
        </Ico>
      </Cell>
      <Drop />
      <Sep />
      <Cell name="Isolate objects">
        <Ico>
          <path d="M2 2h8v8H2zM10 12l4 8H6z" stroke={G} strokeWidth="1.600" />
          <circle cx="16" cy="9" r="4" stroke={G} strokeWidth="1.600" />
        </Ico>
      </Cell>
      <Sep2 />
      <Cell name="Hardware acceleration" on>
        <Ico>
          <circle cx="11" cy="11" r="10" fill="#1876dc" />
          <circle cx="11" cy="11" r="6" stroke="#0f4e9c" strokeWidth="2" />
          <path d="M8 11l2 3 5-6" stroke="#0f4e9c" strokeWidth="2" />
        </Ico>
      </Cell>
      <Sep2 />
      <Cell name="Trusted DWG">
        <Ico>
          <path d="M2 12h9v8H2z" fill="#f3dc2c" />
          <path d="M2 2h8l6 6v5H2z" fill="#f2f2f2" />
          <path d="M9 6h10v8H9z" fill="#3d7cc4" />
          <circle cx="6" cy="6" r="2.500" fill="#4a84c8" />
          <path d="M10 16l4 4 7-7" stroke="#5cc23a" strokeWidth="2.500" />
        </Ico>
      </Cell>
      <Sep2 />
      <Cell name="Clean screen">
        <Ico>
          <path d="M1 4h20v14H1z" stroke={G} strokeWidth="1.700" />
          <path d="M5 15l4-4M5 11v4h4M17 7l-4 4M13 7h4v4" stroke={G} strokeWidth="1.700" />
        </Ico>
      </Cell>
      <Cell name="Customization">
        <Ico>
          <path d="M2 3h19v2.500H2zM2 10h19v2.500H2zM2 17h19v2.500H2z" fill="#d8d8d8" />
        </Ico>
      </Cell>
    </div>
  );
}

function Footer() {
  const shape =
    "[clip-path:polygon(0_0,100%_0,96%_30%,91%_85%,88%_100%,12%_100%,9%_85%,4%_30%)]";
  return (
    <footer className="flex border-t border-[#55595e] bg-[#383838] pb-px">
      <div className="flex h-[22px] w-[408px] shrink-0 pl-[10px]">
        <button
          className={"w-[80px] bg-gradient-to-b from-[#6c6c6c] to-[#919191] font-bold leading-5 text-white " + shape}
        >
          Model
        </button>
        <button className={"-ml-1 w-[82px] bg-[#5c5c5c] leading-5 text-[#bababa] " + shape}>Layout1</button>
        <button className={"-ml-px w-[82px] bg-[#5c5c5c] leading-5 text-[#bababa] " + shape}>Layout2</button>
        <button
          aria-label="New layout"
          className="ml-1 flex w-[30px] items-center justify-center bg-[#525252] [clip-path:polygon(18%_0,100%_0,85%_100%,0_100%)]"
        >
          <svg viewBox="0 0 10 10" className="h-[10px] w-[10px]" stroke="#c4c4c4" strokeWidth="2">
            <path d="M5 0v10M0 5h10" />
          </svg>
        </button>
      </div>
      <StatusBar />
    </footer>
  );
}

export default function App() {
  return (
    <div className="flex min-h-screen flex-col overflow-hidden bg-[#383838] font-['Noto_Sans',sans-serif] text-sm">
      <Header />
      <Ribbon />
      <FileTabs />
      <Viewport />
      <Footer />
    </div>
  );
}
